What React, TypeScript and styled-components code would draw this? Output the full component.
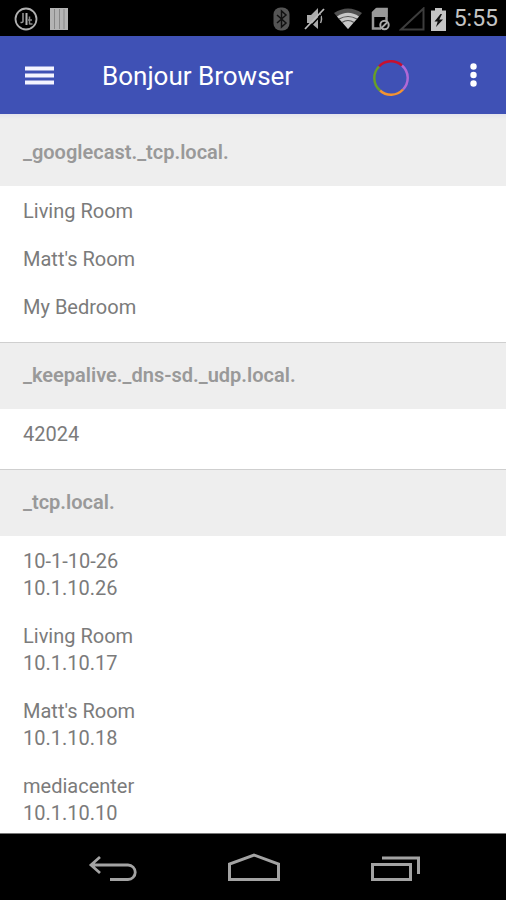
import React from "react";
import styled, { createGlobalStyle } from "styled-components";

const GlobalStyle = createGlobalStyle`
  * { box-sizing: border-box; }
  html, body, #root { height: 100%; }
  body { margin: 0; background: #fff; font-family: Roboto, "Noto Sans", sans-serif; }
`;

const Screen = styled.div`
  display: flex;
  flex-direction: column;
  height: 100vh;
  background: #fff;
`;

const StatusBar = styled.div`
  display: flex;
  flex: none;
  align-items: center;
  justify-content: space-between;
  height: 36px;
  padding: 2px 8px 0 14px;
  background: #000;
`;

const StatusGroup = styled.div<{ $gap: number }>`
  display: flex;
  align-items: center;
  gap: ${(p) => p.$gap}px;
`;

const Clock = styled.time`
  color: #c4c4c4;
  font-size: 23px;
  line-height: 32px;
`;

const Toolbar = styled.header`
  display: flex;
  flex: none;
  align-items: center;
  height: 78px;
  padding: 2px 16px 0 24px;
  background: #3f51b5;
  color: #fff;
`;

const IconButton = styled.button`
  display: flex;
  align-items: center;
  justify-content: center;
  padding: 0;
  border: 0;
  background: none;
  color: inherit;
  cursor: pointer;
`;

const Title = styled.h1`
  flex: 1;
  margin: 0 0 0 47px;
  font-size: 26px;
  font-weight: 400;
  line-height: 32px;
`;

const Spinner = styled.svg`
  margin: 4px 48px 0 0;
`;

const Content = styled.main`
  flex: 1;
  min-height: 0;
  overflow: hidden;
  padding-top: 5px;
  background: linear-gradient(#e4e4ec, #eeeeee 5px, #fff 5px);
`;

const Group = styled.section`
  & + & > h2 {
    padding-top: 19px;
    border-top: 1px solid #cfcfcf;
  }
`;

const GroupTitle = styled.h2`
  margin: 0;
  padding: 20px 23px;
  background: #eee;
  color: #999;
  font-size: 20px;
  font-weight: 600;
  line-height: 27px;
`;

const ServiceList = styled.ul`
  margin: 0;
  padding: 12px 0 0;
  list-style: none;
`;

const Service = styled.li`
  padding: 0 23px 21px;
  color: #7b7b7b;
  font-size: 20px;
  line-height: 27px;
`;

const Line = styled.div``;

const NavBar = styled.nav`
  display: flex;
  flex: none;
  align-items: center;
  justify-content: center;
  gap: 85px;
  height: 67px;
  padding: 8px 0 0 2px;
  border-top: 1px solid #777;
  background: #000;
  color: #a3a3a3;
`;

const groups = [
  { title: "_googlecast._tcp.local.", services: [["Living Room"], ["Matt's Room"], ["My Bedroom"]] },
  { title: "_keepalive._dns-sd._udp.local.", services: [["42024"]] },
  {
    title: "_tcp.local.",
    services: [
      ["10-1-10-26", "10.1.10.26"],
      ["Living Room", "10.1.10.17"],
      ["Matt's Room", "10.1.10.18"],
      ["mediacenter", "10.1.10.10"],
    ],
  },
];

const AppBadge = () => (
  <svg width="24" height="24" viewBox="0 0 24 24" fill="none" stroke="#b0b0b0">
    <circle cx="12" cy="12" r="10.5" strokeWidth="1.8" />
    <path d="M9 6v8.500q0 1-2.500 1" strokeWidth="1.500" stroke="#999" />
    <path d="M12.500 6v12" strokeWidth="2" />
    <path d="M15.500 9.500v8M18 13h-4M18.500 17h-3" strokeWidth="1.500" stroke="#888" />
  </svg>
);

const Bars = () => (
  <svg width="18" height="22" viewBox="0 0 18 22">
    <path fill="#b4b4b4" d="M0 0h18v22H0z" />
    <path stroke="#888" d="M4.500 1v20M9.500 1v20M14 1v20" />
  </svg>
);

const Bluetooth = () => (
  <svg width="17" height="24" viewBox="0 0 17 24">
    <rect x="0.500" y="0.500" width="16" height="23" rx="7" fill="#555" />
    <path d="M4 8l9 8-4.500 4V4L13 8l-9 8" fill="none" stroke="#111" strokeWidth="1.500" />
  </svg>
);

const Muted = () => (
  <svg width="21" height="24" viewBox="0 0 21 24">
    <path d="M3 8h4l7-7v21l-7-6H3z" fill="#aaa" />
    <path d="M16.500 7q2 5 0 9" fill="none" stroke="#aaa" strokeWidth="1.500" />
    <path d="M3 23L21 4" stroke="#000" strokeWidth="1.500" />
    <path d="M1 22L20 2" stroke="#bbb" strokeWidth="1.800" />
  </svg>
);

const Wifi = () => (
  <svg width="28" height="22" viewBox="0 0 28 22">
    <path d="M14 21L0 5Q14-4 28 5z" fill="#505050" />
    <path d="M14 21L3 8.500Q14 1 25 8.500z" fill="#c8c8c8" />
    <path d="M5 11q9-5 18 0M8 14.500q6-4 12 0" fill="none" stroke="#555" strokeWidth="1.200" />
  </svg>
);

const SimBlocked = () => (
  <svg width="19" height="24" viewBox="0 0 19 24">
    <path d="M2 6l4-4h9.500v12M2 5v16.500h8" fill="none" stroke="#999" strokeWidth="2.500" />
    <path d="M1 5l4-4h11.500v9H1z" fill="#999" />
    <circle cx="13.500" cy="18" r="4.200" fill="#000" stroke="#aaa" strokeWidth="2" />
    <path d="M10.500 21l6-6" stroke="#aaa" strokeWidth="1.800" />
  </svg>
);

const Signal = () => (
  <svg width="26" height="24" viewBox="0 0 26 24">
    <path d="M2 22.500L24.500 1.500v21z" fill="none" stroke="#3d3d3d" strokeWidth="2" />
  </svg>
);

const Battery = () => (
  <svg width="15" height="23" viewBox="0 0 15 23">
    <path d="M4 0h7v2.500h4V23H0V2.500h4z" fill="#c4c4c4" />
    <path d="M9.500 6L3.500 13.500h3.200L5 19l7-7.500H8.300L11 6z" fill="#111" />
  </svg>
);

export default function App() {
  return (
    <Screen>
      <GlobalStyle />
      <StatusBar>
        <StatusGroup $gap={12}>
          <AppBadge />
          <Bars />
        </StatusGroup>
        <StatusGroup $gap={6}>
          <StatusGroup $gap={14}>
            <Bluetooth />
            <StatusGroup $gap={9}>
              <Muted />
              <Wifi />
              <SimBlocked />
              <Signal />
            </StatusGroup>
          </StatusGroup>
          <StatusGroup $gap={8}>
            <Battery />
            <Clock>5:55</Clock>
          </StatusGroup>
        </StatusGroup>
      </StatusBar>
      <Toolbar>
        <IconButton type="button" aria-label="Open menu">
          <svg width="31" height="22" viewBox="0 0 31 22">
            <path d="M1 3.500h29M1 10.500h29M1 17.500h29" stroke="#f4f4ff" strokeWidth="3.800" />
          </svg>
        </IconButton>
        <Title>Bonjour Browser</Title>
        <Spinner width="36" height="36" viewBox="0 0 36 36" fill="none" strokeWidth="2.500" role="img" aria-label="Searching">
          <path d="M6 6.500A16.500 16.500 0 0 1 29 5.500" stroke="#c8102e" />
          <path d="M29 5.500A16.500 16.500 0 0 1 30 29.500" stroke="#b069d6" />
          <path d="M30 29.500A16.500 16.500 0 0 1 7 30.500" stroke="#f59330" />
          <path d="M7 30.500A16.500 16.500 0 0 1 6 6.500" stroke="#689f28" />
        </Spinner>
        <IconButton type="button" aria-label="More options">
          <svg width="33" height="28" viewBox="0 0 33 28" fill="#fff">
            <circle cx="16.500" cy="4.500" r="3.200" />
            <circle cx="16.500" cy="13" r="3.200" />
            <circle cx="16.500" cy="21.500" r="3.200" />
          </svg>
        </IconButton>
      </Toolbar>
      <Content>
        {groups.map((group) => (
          <Group key={group.title}>
            <GroupTitle>{group.title}</GroupTitle>
            <ServiceList>
              {group.services.map((lines) => (
                <Service key={lines[0]}>
                  {lines.map((line) => (
                    <Line key={line}>{line}</Line>
                  ))}
                </Service>
              ))}
            </ServiceList>
          </Group>
        ))}
      </Content>
      <NavBar aria-label="System navigation">
        <IconButton type="button" aria-label="Back">
          <svg width="60" height="40" viewBox="0 0 60 40" fill="none" stroke="currentColor" strokeWidth="2.800">
            <path d="M18 6L9 14l9 8M10 14h36a7 7 0 0 1 0 14.500H28" />
          </svg>
        </IconButton>
        <IconButton type="button" aria-label="Home">
          <svg width="54" height="40" viewBox="0 0 54 40" fill="none" stroke="currentColor" strokeWidth="3">
            <path d="M2.500 28.500V13L27 4l24.500 9v15.500z" />
          </svg>
        </IconButton>
        <IconButton type="button" aria-label="Recent apps">
          <svg width="60" height="40" viewBox="0 0 60 40" fill="none" stroke="currentColor" strokeWidth="3">
            <path d="M6.500 13.500h38v15h-38zM16 7h36.500v16" />
          </svg>
        </IconButton>
      </NavBar>
    </Screen>
  );
}
